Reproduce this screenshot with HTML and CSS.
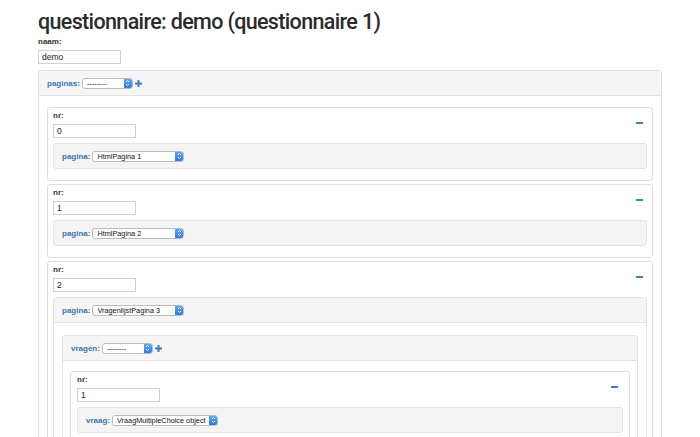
FILE: index.html
```html
<!DOCTYPE html>
<html>
<head>
<meta charset="utf-8">
<link rel="stylesheet" href="styles.css">
</head>
<body>
<div class="page">
  <h1 class="title">questionnaire: demo (questionnaire 1)</h1>
  <label class="lbl">naam:</label>
  <div class="text">demo</div>

  <div class="panel outer">
    <div class="panel-head">
      <span class="blbl">paginas:</span>
      <span class="select w50"><span class="sel-text">--------</span><span class="step"><svg viewBox="0 0 7 10" width="7" height="10"><path d="M2 4 L3.5 2.5 L5 4 M2 6 L3.5 7.5 L5 6" fill="none" stroke="#fff" stroke-width="0.9"/></svg></span></span>
      <svg class="plus" viewBox="0 0 7 7" width="7" height="7"><path d="M3.5 0 V7 M0 3.5 H7" stroke="#3b7cc0" stroke-width="2"/></svg>
    </div>
    <div class="panel-body">

      <div class="card">
        <svg class="minus" viewBox="0 0 7 2" width="7" height="2"><rect width="7" height="2" fill="#3d80c6"/></svg>
        <label class="lbl">nr:</label>
        <div class="text">0</div>
        <div class="box">
          <span class="blbl">pagina:</span>
          <span class="select w91"><span class="sel-text">HtmlPagina 1</span><span class="step"><svg viewBox="0 0 7 10" width="7" height="10"><path d="M2 4 L3.5 2.5 L5 4 M2 6 L3.5 7.5 L5 6" fill="none" stroke="#fff" stroke-width="0.9"/></svg></span></span>
        </div>
      </div>

      <div class="card">
        <svg class="minus" viewBox="0 0 7 2" width="7" height="2"><rect width="7" height="2" fill="#3d80c6"/></svg>
        <label class="lbl">nr:</label>
        <div class="text">1</div>
        <div class="box">
          <span class="blbl">pagina:</span>
          <span class="select w91"><span class="sel-text">HtmlPagina 2</span><span class="step"><svg viewBox="0 0 7 10" width="7" height="10"><path d="M2 4 L3.5 2.5 L5 4 M2 6 L3.5 7.5 L5 6" fill="none" stroke="#fff" stroke-width="0.9"/></svg></span></span>
        </div>
      </div>

      <div class="card">
        <svg class="minus" viewBox="0 0 7 2" width="7" height="2"><rect width="7" height="2" fill="#3d80c6"/></svg>
        <label class="lbl">nr:</label>
        <div class="text">2</div>
        <div class="panel sub">
          <div class="panel-head">
            <span class="blbl">pagina:</span>
            <span class="select w91"><span class="sel-text">VragenlijstPagina 3</span><span class="step"><svg viewBox="0 0 7 10" width="7" height="10"><path d="M2 4 L3.5 2.5 L5 4 M2 6 L3.5 7.5 L5 6" fill="none" stroke="#fff" stroke-width="0.9"/></svg></span></span>
          </div>
          <div class="panel-body sub-body">
            <div class="panel sub">
              <div class="panel-head">
                <span class="blbl">vragen:</span>
                <span class="select w50"><span class="sel-text">--------</span><span class="step"><svg viewBox="0 0 7 10" width="7" height="10"><path d="M2 4 L3.5 2.5 L5 4 M2 6 L3.5 7.5 L5 6" fill="none" stroke="#fff" stroke-width="0.9"/></svg></span></span>
                <svg class="plus" viewBox="0 0 7 7" width="7" height="7"><path d="M3.5 0 V7 M0 3.5 H7" stroke="#3b7cc0" stroke-width="2"/></svg>
              </div>
              <div class="panel-body inner-body">
                <div class="card inner">
                  <svg class="minus" viewBox="0 0 7 2" width="7" height="2"><rect width="7" height="2" fill="#3d80c6"/></svg>
                  <label class="lbl">nr:</label>
                  <div class="text">1</div>
                  <div class="box">
                    <span class="blbl">vraag:</span>
                    <span class="select w105"><span class="sel-text">VraagMultipleChoice object</span><span class="step"><svg viewBox="0 0 7 10" width="7" height="10"><path d="M2 4 L3.5 2.5 L5 4 M2 6 L3.5 7.5 L5 6" fill="none" stroke="#fff" stroke-width="0.9"/></svg></span></span>
                  </div>
                </div>
              </div>
            </div>
          </div>
        </div>
      </div>

    </div>
  </div>
</div>
</body>
</html>
```

FILE: styles.css
```css
* { box-sizing: border-box; }
html, body { margin: 0; padding: 0; overflow: hidden; background: #fff; }
body { font-family: "Liberation Sans", Arial, sans-serif; color: #333; }

.page { padding-left: 38px; width: 662px; }

.title {
  margin: 8px 0 0;
  font-family: Roboto, "Liberation Sans", sans-serif;
  font-size: 21.5px;
  line-height: 28px;
  font-weight: 500;
  letter-spacing: -0.65px;
  color: #2b2b2b;
}

.lbl {
  display: block;
  font-size: 8px;
  line-height: 11px;
  font-weight: bold;
  color: #333;
  margin-bottom: 3px;
}

.text {
  width: 83px;
  height: 14px;
  border: 1px solid #d0d0d0;
  background: #fff;
  font-size: 8.5px;
  line-height: 12px;
  padding-left: 3px;
  color: #222;
}

.panel {
  border: 1px solid #e0e0e0;
  border-radius: 3px;
  background: #fff;
}
.outer { margin-top: 6px; width: 624px; }

.panel-head {
  display: flex;
  align-items: center;
  height: 25px;
  padding-left: 8px;
  background: #f5f5f5;
  border-bottom: 1px solid #e2e2e2;
  border-radius: 3px 3px 0 0;
}

.panel-body { padding: 11px 8px 0 8px; }

.blbl {
  font-size: 8px;
  font-weight: bold;
  color: #3a75b0;
  margin-right: 2px;
}

.select {
  display: inline-flex;
  align-items: stretch;
  height: 11px;
  border: 1px solid #bcbcbc;
  border-radius: 3px;
  background: #fff;
  overflow: hidden;
}
.sel-text {
  flex: 1;
  font-size: 7.3px;
  line-height: 9px;
  padding-left: 4px;
  color: #111;
  white-space: nowrap;
  overflow: hidden;
}
.step {
  width: 8px;
  display: flex;
  align-items: center;
  justify-content: center;
  background: linear-gradient(#5ea6f4, #2c79e2);
}
.step svg { display: block; }
.w50 { width: 51px; }
.w91 { width: 92px; }
.w105 { width: 106px; }

.plus { margin-left: 2px; display: block; }

.card {
  position: relative;
  border: 1px solid #dedede;
  border-radius: 3px;
  padding: 2px 5px 11px 5px;
  margin-bottom: 3px;
  background: #fff;
}

.minus { position: absolute; top: 14px; right: 9px; display: block; }

.card .text { margin-bottom: 5px; }

.box {
  display: flex;
  align-items: center;
  height: 26px;
  padding-left: 8px;
  background: #f4f4f4;
  border: 1px solid #e3e3e3;
  border-radius: 3px;
}

.sub { border-color: #e3e3e3; }
.sub > .panel-head { height: 25px; }
.sub-body { padding: 12px 8px 0 8px; }
.inner-body { padding: 10px 7px 0 7px; }
.card.inner { padding-left: 6px; padding-right: 6px; }
.card.inner .minus { right: 11px; top: 14px; }
```
